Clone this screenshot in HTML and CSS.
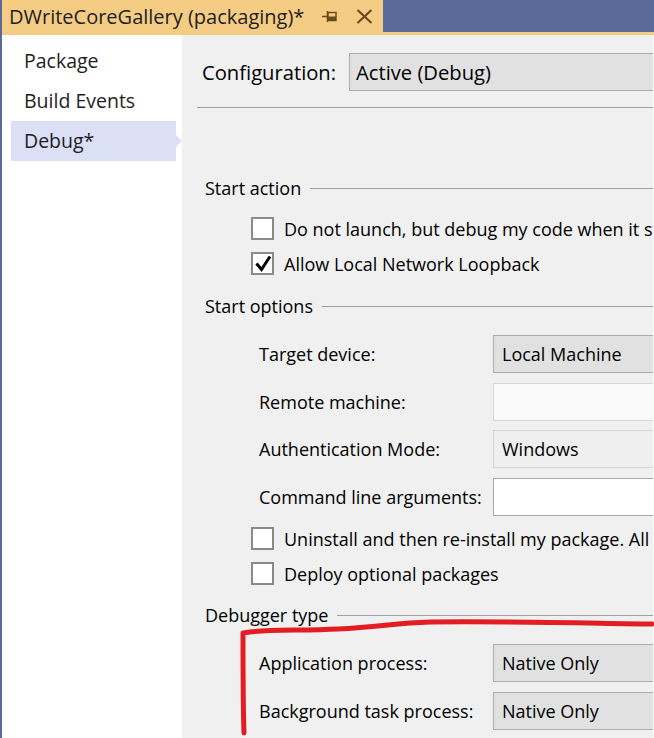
FILE: index.html
```html
<!DOCTYPE html>
<html>
<head>
<meta charset="utf-8">
<link rel="stylesheet" href="styles.css">
</head>
<body>
<div class="window">
  <div class="tabstrip">
    <div class="tab">
      <span class="tab-title">DWriteCoreGallery (packaging)*</span>
      <svg class="pin" width="16" height="14" viewBox="0 0 16 14"><path d="M0 6.5H5" stroke="#6b4a1f" stroke-width="1.5"/><path d="M5.5 1V12" stroke="#6b4a1f" stroke-width="1.5"/><rect x="6" y="2.5" width="8" height="8" fill="none" stroke="#6b4a1f" stroke-width="1.4"/><rect x="6" y="6.5" width="8" height="4" fill="#6b4a1f"/></svg>
      <svg class="close" width="17" height="15" viewBox="0 0 17 15"><path d="M1.5 1L15.5 14M15.5 1L1.5 14" stroke="#6b4a1f" stroke-width="2.2"/></svg>
    </div>
  </div>
  <div class="tabline"></div>
  <div class="main">
    <nav class="nav">
      <div class="nav-item">Package</div>
      <div class="nav-item">Build Events</div>
      <div class="nav-item selected">Debug*</div>
    </nav>
    <div class="content">
      <div class="config-row">
        <span class="config-label">Configuration:</span>
        <div class="field combo config-combo">Active (Debug)</div>
      </div>
      <div class="sep"></div>

      <div class="group-head head-start">Start action</div>
      <div class="check-row first">
        <span class="box"></span><span class="check-text">Do not launch, but debug my code when it starts</span>
      </div>
      <div class="check-row">
        <span class="box"><svg width="19" height="19" viewBox="0 0 19 19"><path d="M3.5 9.5L8.5 15.5L17 2.5" fill="none" stroke="#000" stroke-width="3"/></svg></span><span class="check-text">Allow Local Network Loopback</span>
      </div>

      <div class="group-head">Start options</div>
      <div class="form-rows start-rows">
        <div class="form-row"><span class="form-label">Target device:</span><div class="field combo">Local Machine</div></div>
        <div class="form-row"><span class="form-label">Remote machine:</span><div class="field disabled-text"></div></div>
        <div class="form-row"><span class="form-label">Authentication Mode:</span><div class="field disabled-combo">Windows</div></div>
        <div class="form-row"><span class="form-label">Command line arguments:</span><div class="field textbox"></div></div>
      </div>
      <div class="check-row after-form">
        <span class="box"></span><span class="check-text">Uninstall and then re-install my package. All information about the application state is deleted.</span>
      </div>
      <div class="check-row">
        <span class="box"></span><span class="check-text">Deploy optional packages</span>
      </div>

      <div class="group-head head-debugger">Debugger type</div>
      <div class="form-rows debugger-rows">
        <div class="form-row"><span class="form-label">Application process:</span><div class="field combo">Native Only</div></div>
        <div class="form-row"><span class="form-label">Background task process:</span><div class="field combo">Native Only</div></div>
      </div>
    </div>
  </div>
  <svg class="annotation" width="654" height="738" viewBox="0 0 654 738">
    <path d="M244 733 C243 705 243 665 243 633 C260 629 300 631 338 629 C380 627 395 623 430 622 C500 621 580 623 652 624" fill="none" stroke="#e21d23" stroke-width="5" stroke-linecap="round" stroke-linejoin="round"/>
  </svg>
</div>
</body>
</html>
```

FILE: styles.css
```css
* { box-sizing: border-box; }
html, body { margin: 0; padding: 0; }
body {
  width: 654px;
  height: 738px;
  overflow: hidden;
  font-family: "Open Sans", "Noto Sans", sans-serif;
  font-size: 18px;
  color: #000;
  background: #f0f0f0;
}
.window {
  position: relative;
  width: 654px;
  height: 738px;
  border-left: 2px solid #5c6a99;
  display: flex;
  flex-direction: column;
}
.tabstrip {
  height: 32px;
  background: #5c6a99;
  display: flex;
}
.tab {
  width: 381px;
  height: 32px;
  background: #f5cc84;
  display: flex;
  align-items: center;
  padding-left: 7px;
}
.tab-title {
  font-size: 20px;
  color: #1e1e1e;
  white-space: nowrap;
}
.pin { margin-left: 18px; margin-top: 1px; }
.close { margin-left: 18px; margin-top: 1px; }
.tabline {
  height: 3px;
  background: #f5cc84;
}
.main {
  flex: 1;
  display: flex;
  min-height: 0;
}
.nav {
  width: 180px;
  flex: none;
  background: #fff;
  padding-top: 6px;
}
.nav-item {
  position: relative;
  margin-left: 9px;
  width: 165px;
  height: 40px;
  line-height: 40px;
  padding-left: 13px;
  font-size: 19.5px;
  color: #1e1e1e;
}
.nav-item.selected {
  background: #dce0f7;
}
.nav-item.selected::after {
  content: "";
  position: absolute;
  right: -6px;
  top: 14px;
  border-top: 6px solid transparent;
  border-bottom: 6px solid transparent;
  border-left: 6px solid #dce0f7;
}
.content {
  flex: 1;
  overflow: hidden;
  background: #f0f0f0;
  border-right: 1px solid #fafafa;
}
.config-row {
  display: flex;
  align-items: center;
  margin-top: 18px;
  padding-left: 20px;
  font-size: 20.2px;
}
.config-label {
  width: 147px;
  flex: none;
  white-space: nowrap;
}
.field {
  flex: none;
  width: 420px;
  height: 38px;
  line-height: 36px;
  padding-left: 8px;
  white-space: nowrap;
}
.config-combo {
  padding-left: 6px;
  background: #e0e0e0;
}
.combo {
  background: #e1e1e1;
  border: 1px solid #adadad;
}
.disabled-text {
  background: #f9f9f9;
  border: 1px solid #d6d6d6;
}
.disabled-combo {
  background: #efefef;
  border: 1px solid #d6d6d6;
}
.textbox {
  background: #fff;
  border: 1px solid #a8a8a8;
}
.sep {
  margin-top: 16px;
  margin-left: 15px;
  height: 1px;
  background: #a0a0a0;
}
.group-head {
  display: flex;
  align-items: center;
  height: 24px;
  padding-left: 23px;
  margin-top: 19px;
  white-space: nowrap;
}
.group-head::after {
  content: "";
  flex: 1;
  height: 1px;
  background: #a0a0a0;
  margin-left: 9px;
}
.head-start { margin-top: 68px; }
.head-debugger { margin-top: 18px; }
.check-row {
  display: flex;
  align-items: center;
  padding-left: 69px;
  height: 23px;
  margin-top: 12px;
  white-space: nowrap;
}
.check-row.first { margin-top: 17px; }
.check-row.after-form { margin-top: 11px; }
.box {
  width: 23px;
  height: 23px;
  flex: none;
  background: #fff;
  border: 2px solid #8a8a8a;
  display: flex;
  align-items: center;
  justify-content: center;
}
.check-text { margin-left: 10px; }
.form-rows {
  display: flex;
  flex-direction: column;
  gap: 9.7px;
  margin-top: 17px;
  padding-left: 77px;
}
.debugger-rows { margin-top: 17px; }
.form-row {
  display: flex;
  align-items: center;
}
.form-label {
  width: 234px;
  flex: none;
  white-space: nowrap;
}
.annotation {
  position: absolute;
  left: -2px;
  top: 0;
  pointer-events: none;
}
```
